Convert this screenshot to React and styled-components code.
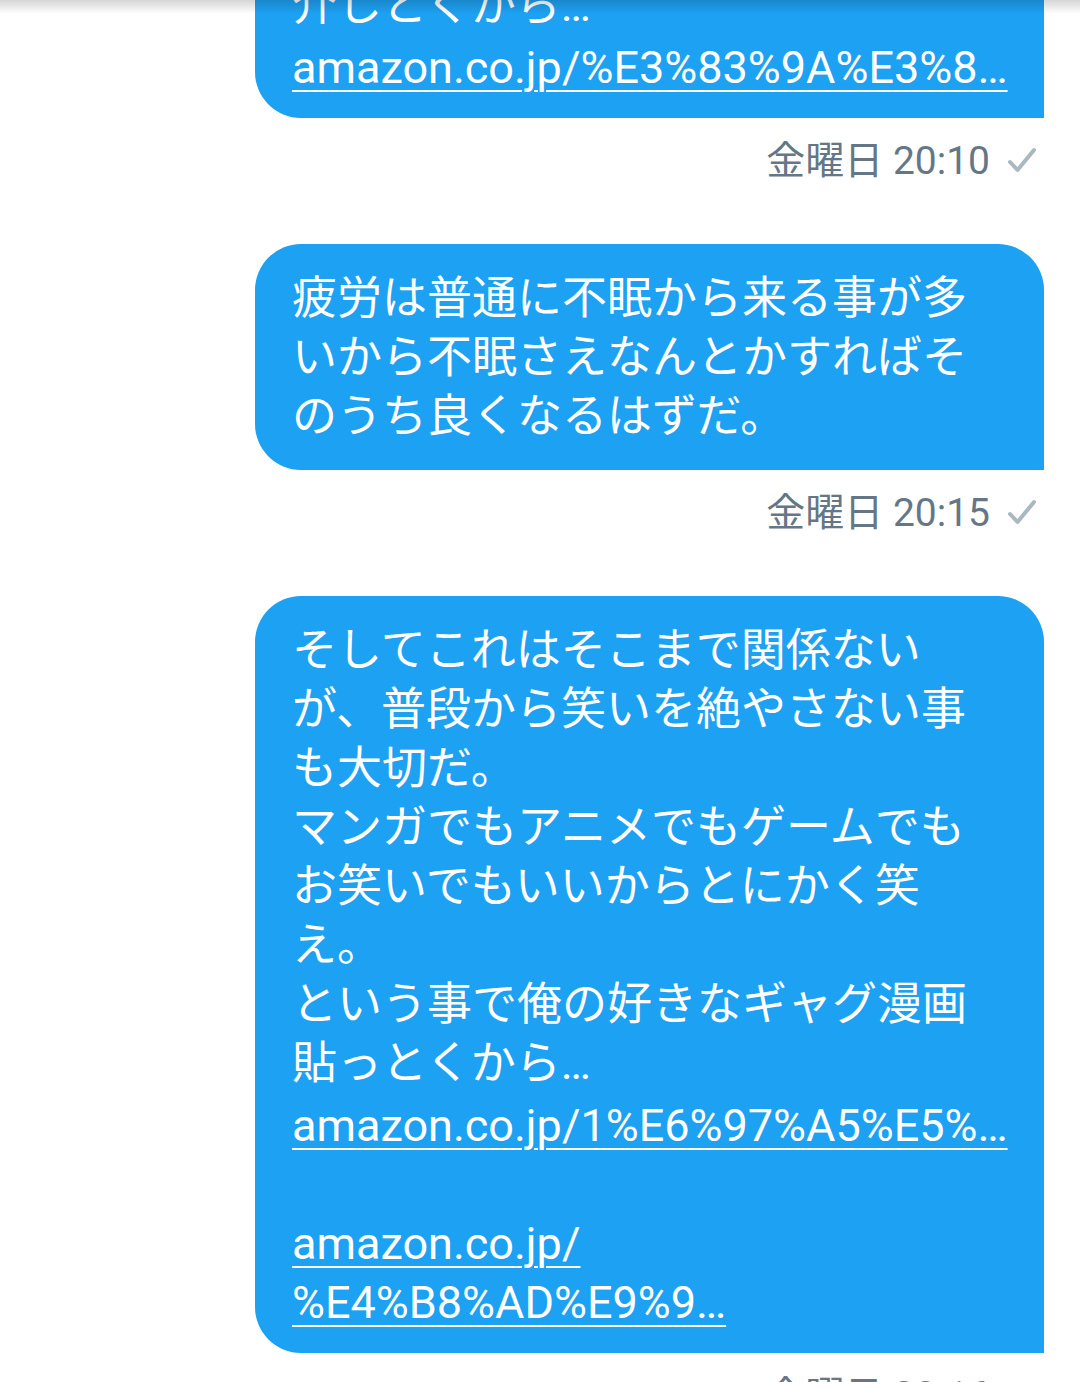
import React from 'react';
import styled, { createGlobalStyle } from 'styled-components';

const GlobalStyle = createGlobalStyle`
  html, body {
    margin: 0;
    padding: 0;
    background: #ffffff;
  }
`;

const Screen = styled.div`
  position: relative;
  width: 1080px;
  height: 1382px;
  overflow: hidden;
  background: #ffffff;
  font-family: Roboto, "Noto Sans CJK JP", sans-serif;
`;

const TopShadow = styled.div`
  position: absolute;
  top: 0;
  left: 0;
  right: 0;
  height: 14px;
  background: linear-gradient(to bottom, rgba(0, 0, 0, 0.16), rgba(0, 0, 0, 0));
  pointer-events: none;
`;

const Thread = styled.div`
  display: flex;
  flex-direction: column;
  align-items: flex-end;
  margin-top: -108px;
  padding-right: 36px;
`;

const Bubble = styled.div`
  box-sizing: border-box;
  width: 789px;
  padding: 25px 37px 24px;
  background: #1da1f2;
  color: #ffffff;
  border-radius: 46px 46px 0 46px;
  font-size: 45px;
`;

const Line = styled.div`
  box-sizing: border-box;
  height: 59px;
  line-height: 59px;
  padding-top: ${(p) => (p.$link ? '3px' : '0')};
  white-space: pre;
`;

const Link = styled.a`
  color: #ffffff;
  text-decoration: underline;
  text-decoration-thickness: 2px;
  text-underline-offset: 7px;
`;

const Meta = styled.div`
  display: flex;
  align-items: center;
  gap: 18px;
  margin: 21px -36px 61px 0;
  padding-right: 44px;
  height: 44px;
  font-size: 39px;
  line-height: 44px;
  color: #657786;
`;

const Check = () => (
  <svg width="28" height="28" viewBox="0 0 28 28">
    <path
      d="M2 15 L9.5 23 L26 3"
      fill="none"
      stroke="#aab8c2"
      strokeWidth="4"
      strokeLinecap="round"
      strokeLinejoin="round"
    />
  </svg>
);

const messages = [
  {
    lines: [
      { text: '俺のおすすめのギャグ漫画を紹' },
      { text: '介しとくから…' },
      { link: 'amazon.co.jp/%E3%83%9A%E3%8…' },
    ],
    time: '金曜日 20:10',
  },
  {
    lines: [
      { text: '疲労は普通に不眠から来る事が多' },
      { text: 'いから不眠さえなんとかすればそ' },
      { text: 'のうち良くなるはずだ。' },
    ],
    time: '金曜日 20:15',
  },
  {
    lines: [
      { text: 'そしてこれはそこまで関係ない' },
      { text: 'が、普段から笑いを絶やさない事' },
      { text: 'も大切だ。' },
      { text: 'マンガでもアニメでもゲームでも' },
      { text: 'お笑いでもいいからとにかく笑' },
      { text: 'え。' },
      { text: 'という事で俺の好きなギャグ漫画' },
      { text: '貼っとくから…' },
      { link: 'amazon.co.jp/1%E6%97%A5%E5%…' },
      { text: '' },
      { link: 'amazon.co.jp/' },
      { link: '%E4%B8%AD%E9%9…' },
    ],
    time: '金曜日 20:16',
  },
];

const App = () => (
  <Screen>
    <GlobalStyle />
    <Thread>
      {messages.map((m, i) => (
        <React.Fragment key={i}>
          <Bubble>
            {m.lines.map((l, j) => (
              <Line key={j} $link={!!l.link}>
                {l.link ? <Link href="#">{l.link}</Link> : l.text}
              </Line>
            ))}
          </Bubble>
          <Meta>
            <span>{m.time}</span>
            <Check />
          </Meta>
        </React.Fragment>
      ))}
    </Thread>
    <TopShadow />
  </Screen>
);

export default App;
